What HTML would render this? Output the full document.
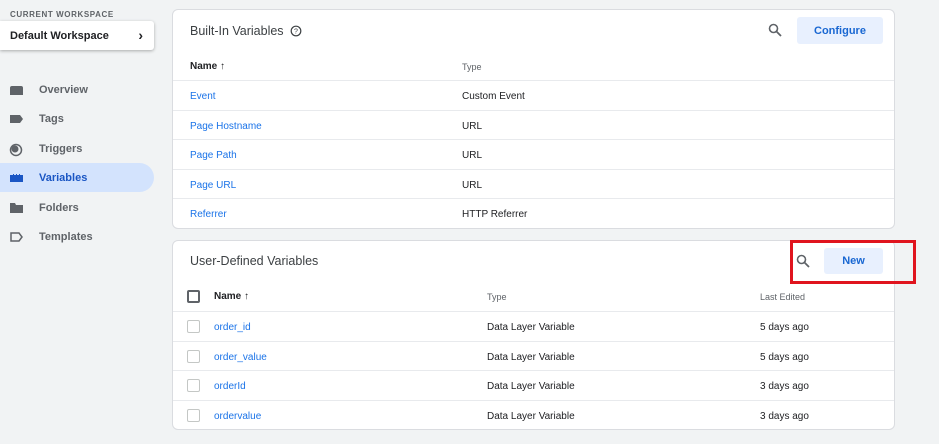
<!DOCTYPE html>
<html><head><style>
*{margin:0;padding:0;box-sizing:border-box}
body{width:939px;height:444px;background:#f1f3f4;font-family:"Liberation Sans",Arial,sans-serif;position:relative;overflow:hidden;color:#202124}
.a{position:absolute}
.lab{font-size:8px;letter-spacing:.6px;color:#5f6368;font-weight:bold}
.ws{left:0;top:21px;width:154px;height:29px;background:#fff;box-shadow:0 1px 3px rgba(0,0,0,.3);border-radius:0 3px 3px 0;font-size:11px;font-weight:bold;padding:9px 10px}
.nav{left:0;width:154px;height:29px;font-size:11px;color:#5f6368;font-weight:bold;padding-left:39px;line-height:30px;border-radius:0 15px 15px 0}
.nav.on{background:#d3e3fd;color:#1a56c4}
.nav svg{position:absolute;left:9px;top:9px}
.card{left:172px;width:723px;background:#fff;border-radius:6px;border:1px solid #dadce0}
.title{font-size:12.5px;color:#3c4043;position:absolute;left:17px}
.row{position:absolute;left:0;right:0;height:29.6px;border-top:1px solid #e8eaed;font-size:10px;line-height:31px}
.lk{color:#1a73e8}
.hd{font-size:10px;font-weight:bold;color:#202124}
.th{font-size:9px;color:#5f6368}
.btn{position:absolute;background:#e8f0fe;color:#1967d2;font-size:11px;font-weight:bold;text-align:center;border-radius:3px}
.cb{position:absolute;left:14px;top:8px;width:13px;height:13px;border:1px solid #c4c7c5;border-radius:2px}
</style></head><body>
<div class="a lab" style="left:10px;top:10px">CURRENT WORKSPACE</div>
<div class="a ws">Default Workspace<span style="position:absolute;right:11px;top:6px;font-size:14px">&#x203A;</span></div>

<div class="a nav" style="top:75px"><svg width="15" height="12"><path d="M1 4Q1 2 3 2H12Q14 2 14 4V11H1Z" fill="#5f6368"/></svg>Overview</div>
<div class="a nav" style="top:104px"><svg width="15" height="12"><path d="M1 2H11L14 6L11 10H1Z" fill="#5f6368"/></svg>Tags</div>
<div class="a nav" style="top:134px"><svg width="15" height="14"><circle cx="7" cy="7" r="5.5" fill="none" stroke="#5f6368" stroke-width="1.5"/><circle cx="6" cy="6" r="3.5" fill="#5f6368"/></svg>Triggers</div>
<div class="a nav on" style="top:163px"><svg width="15" height="12"><path d="M1 3H4V2H5V3H7V2H8V3H10V2H11V3H14V10H1Z" fill="#1a56c4"/></svg>Variables</div>
<div class="a nav" style="top:193px"><svg width="15" height="12"><path d="M1 1H6L7 3H14V11H1Z" fill="#5f6368"/></svg>Folders</div>
<div class="a nav" style="top:222px"><svg width="15" height="12"><path d="M2 2H10L13 6L10 10H2Z" fill="none" stroke="#5f6368" stroke-width="1.5"/></svg>Templates</div>

<div class="a card" style="top:9px;height:220px">
 <div class="title" style="top:14px">Built-In Variables <svg width="12" height="12" style="vertical-align:-2px;margin-left:3px"><circle cx="6" cy="6" r="4.8" fill="none" stroke="#3c4043" stroke-width="1.2"/><text x="6" y="8.6" font-size="7" text-anchor="middle" fill="#3c4043" font-family="Liberation Sans">?</text></svg></div>
 <svg class="a" style="left:595px;top:13px" width="14" height="14"><circle cx="5.5" cy="5.5" r="4" fill="none" stroke="#5f6368" stroke-width="1.6"/><path d="M8.5 8.5L13 13" stroke="#5f6368" stroke-width="1.8"/></svg>
 <div class="btn" style="left:624px;top:7px;width:86px;height:27px;line-height:28px">Configure</div>
 <div class="a hd" style="left:17px;top:51px">Name <span style="font-weight:normal">&#x2191;</span></div>
 <div class="a th" style="left:289px;top:52px">Type</div>
 <div class="row" style="top:70px"><span class="a lk" style="left:17px">Event</span><span class="a" style="left:289px">Custom Event</span></div>
 <div class="row" style="top:99.6px"><span class="a lk" style="left:17px">Page Hostname</span><span class="a" style="left:289px">URL</span></div>
 <div class="row" style="top:129.2px"><span class="a lk" style="left:17px">Page Path</span><span class="a" style="left:289px">URL</span></div>
 <div class="row" style="top:158.8px"><span class="a lk" style="left:17px">Page URL</span><span class="a" style="left:289px">URL</span></div>
 <div class="row" style="top:188.4px"><span class="a lk" style="left:17px">Referrer</span><span class="a" style="left:289px">HTTP Referrer</span></div>
</div>

<div class="a card" style="top:240px;height:190px">
 <div class="title" style="top:13px">User-Defined Variables</div>
 <svg class="a" style="left:623px;top:13px" width="14" height="14"><circle cx="5.5" cy="5.5" r="4" fill="none" stroke="#5f6368" stroke-width="1.6"/><path d="M8.5 8.5L13 13" stroke="#5f6368" stroke-width="1.8"/></svg>
 <div class="btn" style="left:651px;top:7px;width:59px;height:26px;line-height:27px">New</div>
 <div class="a" style="left:14px;top:49px;width:13px;height:13px;border:2px solid #5f6368;border-radius:2px"></div>
 <div class="a hd" style="left:41px;top:50px">Name <span style="font-weight:normal">&#x2191;</span></div>
 <div class="a th" style="left:314px;top:51px">Type</div>
 <div class="a th" style="left:587px;top:51px">Last Edited</div>
 <div class="row" style="top:70px"><div class="cb"></div><span class="a lk" style="left:41px">order_id</span><span class="a" style="left:314px">Data Layer Variable</span><span class="a" style="left:587px">5 days ago</span></div>
 <div class="row" style="top:99.6px"><div class="cb"></div><span class="a lk" style="left:41px">order_value</span><span class="a" style="left:314px">Data Layer Variable</span><span class="a" style="left:587px">5 days ago</span></div>
 <div class="row" style="top:129.2px"><div class="cb"></div><span class="a lk" style="left:41px">orderId</span><span class="a" style="left:314px">Data Layer Variable</span><span class="a" style="left:587px">3 days ago</span></div>
 <div class="row" style="top:158.8px"><div class="cb"></div><span class="a lk" style="left:41px">ordervalue</span><span class="a" style="left:314px">Data Layer Variable</span><span class="a" style="left:587px">3 days ago</span></div>
</div>

<div class="a" style="left:790px;top:240px;width:126px;height:44px;border:3px solid #e0141e"></div>
</body></html>
